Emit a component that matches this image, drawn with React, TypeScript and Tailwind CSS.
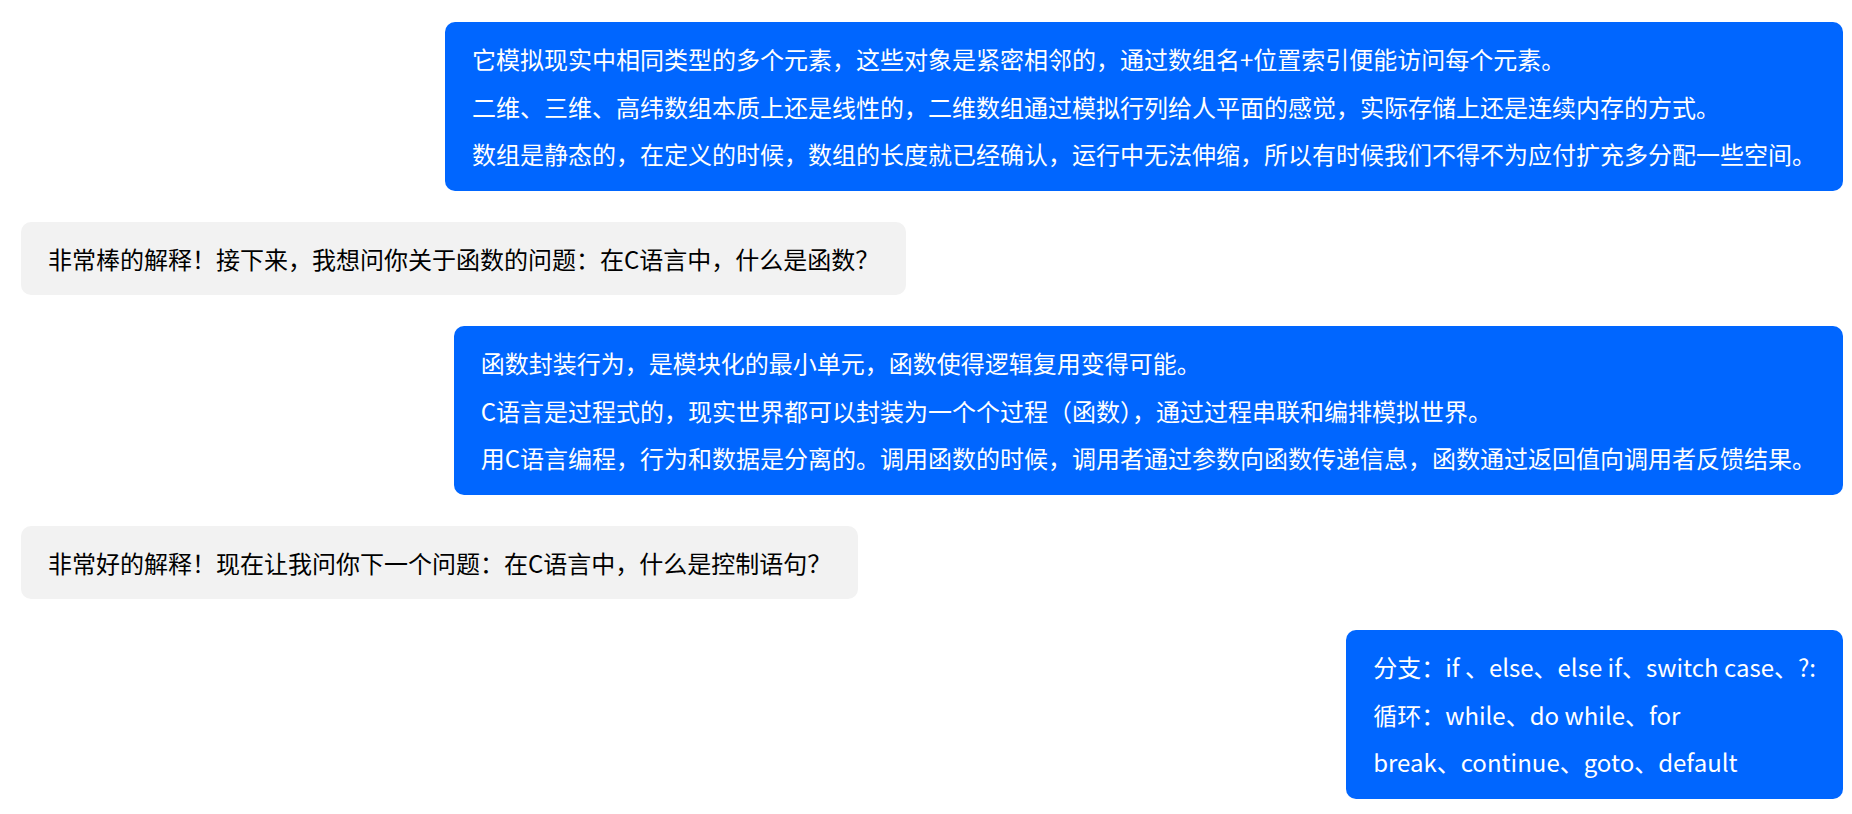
import React from 'react';

type Message = {
  role: 'user' | 'bot';
  lines: string[];
};

const messages: Message[] = [
  {
    role: 'user',
    lines: [
      '它模拟现实中相同类型的多个元素，这些对象是紧密相邻的，通过数组名+位置索引便能访问每个元素。',
      '二维、三维、高纬数组本质上还是线性的，二维数组通过模拟行列给人平面的感觉，实际存储上还是连续内存的方式。',
      '数组是静态的，在定义的时候，数组的长度就已经确认，运行中无法伸缩，所以有时候我们不得不为应付扩充多分配一些空间。',
    ],
  },
  {
    role: 'bot',
    lines: ['非常棒的解释！接下来，我想问你关于函数的问题：在C语言中，什么是函数？'],
  },
  {
    role: 'user',
    lines: [
      '函数封装行为，是模块化的最小单元，函数使得逻辑复用变得可能。',
      'C语言是过程式的，现实世界都可以封装为一个个过程（函数），通过过程串联和编排模拟世界。',
      '用C语言编程，行为和数据是分离的。调用函数的时候，调用者通过参数向函数传递信息，函数通过返回值向调用者反馈结果。',
    ],
  },
  {
    role: 'bot',
    lines: ['非常好的解释！现在让我问你下一个问题：在C语言中，什么是控制语句？'],
  },
  {
    role: 'user',
    lines: ['分支：if 、else、else if、switch case、?:', '循环：while、do while、for', 'break、continue、goto、default'],
  },
];

const Bubble: React.FC<{ message: Message }> = ({ message }) => {
  const isUser = message.role === 'user';
  return (
    <div className={`flex ${isUser ? 'justify-end' : 'justify-start'}`}>
      <div
        className={`rounded-[10px] px-[27px] py-[13px] text-[24px] leading-[47.5px] whitespace-pre ${
          isUser ? 'bg-[#0066ff] text-white' : 'bg-[#f2f2f2] text-black'
        }`}
      >
        {message.lines.map((line, i) => (
          <p key={i}>{line}</p>
        ))}
      </div>
    </div>
  );
};

export default function App() {
  return (
    <div
      className="min-h-screen bg-white pt-[22px] pb-[18px] pl-[21px] pr-[9px] flex flex-col gap-[31px]"
      style={{ fontFamily: '"Noto Sans CJK SC", "Noto Sans", sans-serif' }}
    >
      {messages.map((m, i) => (
        <Bubble key={i} message={m} />
      ))}
    </div>
  );
}
